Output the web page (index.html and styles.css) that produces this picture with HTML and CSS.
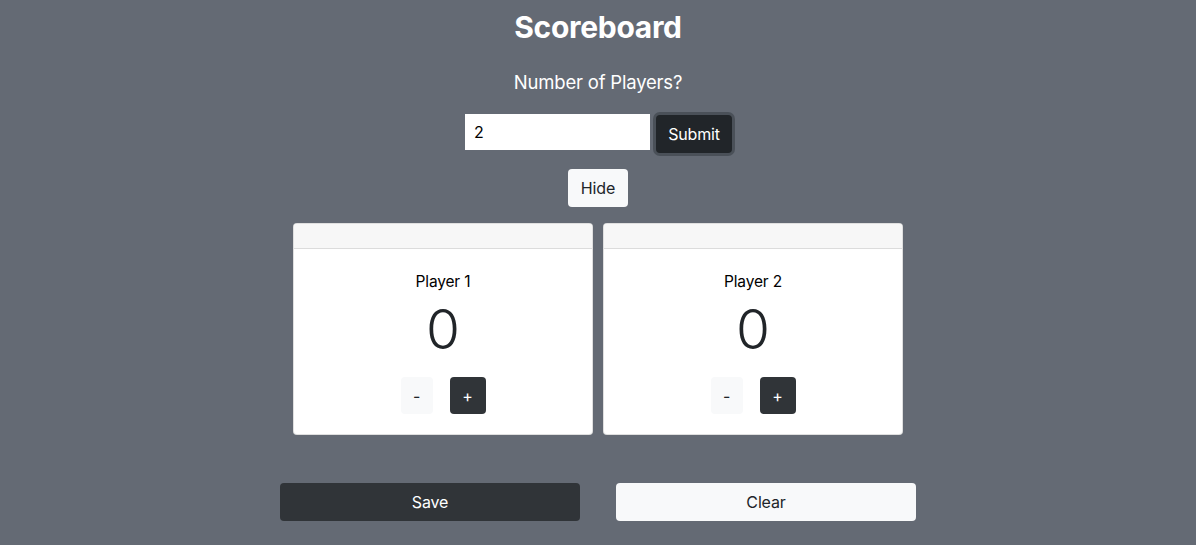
FILE: index.html
```html
<!DOCTYPE html>
<html lang="en">
<head>
<meta charset="utf-8">
<title>Scoreboard</title>
<link rel="stylesheet" href="styles.css">
</head>
<body>
<main class="app">
  <h1 class="title">Scoreboard</h1>
  <p class="question">Number of Players?</p>
  <form class="players-form">
    <input class="players-input" type="text" value="2">
    <button type="button" class="btn btn-submit">Submit</button>
  </form>
  <button type="button" class="btn btn-light btn-hide">Hide</button>
  <section class="cards">
    <div class="card">
      <div class="card-header"></div>
      <div class="card-body">
        <div class="player-name">Player 1</div>
        <div class="score">0</div>
        <div class="controls">
          <button type="button" class="btn btn-light btn-minus">-</button>
          <button type="button" class="btn btn-dark btn-plus">+</button>
        </div>
      </div>
    </div>
    <div class="card">
      <div class="card-header"></div>
      <div class="card-body">
        <div class="player-name">Player 2</div>
        <div class="score">0</div>
        <div class="controls">
          <button type="button" class="btn btn-light btn-minus">-</button>
          <button type="button" class="btn btn-dark btn-plus">+</button>
        </div>
      </div>
    </div>
  </section>
  <div class="actions">
    <button type="button" class="btn btn-dark btn-wide">Save</button>
    <button type="button" class="btn btn-light btn-wide">Clear</button>
  </div>
</main>
</body>
</html>
```

FILE: styles.css
```css
* { box-sizing: border-box; }

html, body {
  margin: 0;
  padding: 0;
  height: 100%;
}

body {
  background: #646a74;
  font-family: "Inter", "Liberation Sans", sans-serif;
  color: #212529;
  overflow: hidden;
  letter-spacing: -0.01em;
}

.app {
  display: flex;
  flex-direction: column;
  align-items: center;
}

.title {
  margin: 8px 0 0;
  font-size: 30px;
  line-height: 38px;
  font-weight: 700;
  color: #fff;
  letter-spacing: -0.3px;
}

.question {
  margin: 21px 0 0;
  font-size: 18.5px;
  line-height: 30px;
  font-weight: 400;
  color: #fff;
  letter-spacing: -0.2px;
}

.players-form {
  margin-top: 17px;
  display: flex;
  align-items: flex-start;
  gap: 6px;
  margin-left: 1px;
}

.players-input {
  width: 185px;
  height: 36px;
  border: none;
  padding: 0 9px;
  font-family: inherit;
  font-size: 16px;
  color: #000;
  background: #fff;
  outline: none;
}

.btn {
  font-family: inherit;
  font-size: 16px;
  line-height: 24px;
  letter-spacing: -0.01em;
  border: none;
  border-radius: 4px;
  cursor: pointer;
  padding: 0;
}

.btn-submit {
  width: 76px;
  height: 38px;
  margin-top: 1px;
  background: #212529;
  color: #fff;
  box-shadow: 0 0 0 3px #4a5058;
}

.btn-light {
  background: #f8f9fa;
  color: #212529;
}

.btn-dark {
  background: #303438;
  color: #fff;
}

.btn-hide {
  margin-top: 16px;
  width: 60px;
  height: 38px;
}

.cards {
  margin-top: 16px;
  display: flex;
  gap: 10px;
}

.card {
  width: 300px;
  background: #fff;
  border: 1px solid rgba(0, 0, 0, 0.125);
  border-radius: 4px;
  overflow: hidden;
}

.card-header {
  height: 25px;
  background: #f7f7f7;
  border-bottom: 1px solid #dcdcdc;
}

.card-body {
  padding: 21px 0 20px;
  display: flex;
  flex-direction: column;
  align-items: center;
}

.player-name {
  font-size: 15.5px;
  line-height: 24px;
  color: #000;
}

.score {
  margin-top: 2px;
  font-size: 55px;
  line-height: 67px;
  font-weight: 300;
  color: #212529;
  letter-spacing: 0;
}

.controls {
  margin-top: 14px;
  display: flex;
  gap: 17px;
}

.btn-minus {
  width: 32px;
  height: 37px;
}

.btn-plus {
  width: 36px;
  height: 37px;
}

.actions {
  margin-top: 48px;
  display: flex;
  gap: 36px;
}

.btn-wide {
  width: 300px;
  height: 38px;
}
```
